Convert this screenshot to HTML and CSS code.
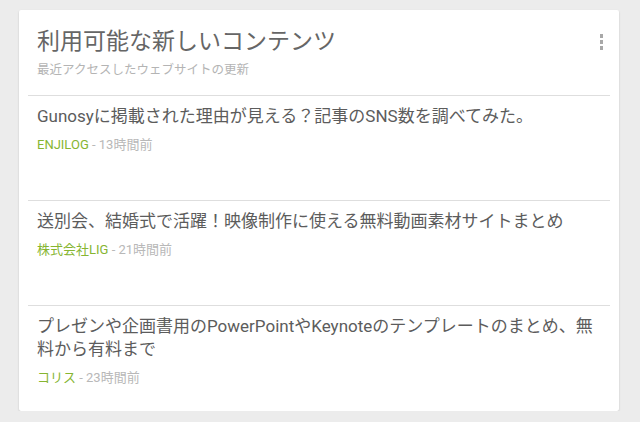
FILE: index.html
```html
<!DOCTYPE html>
<html lang="ja">
<head>
<meta charset="utf-8">
<link rel="stylesheet" href="styles.css">
</head>
<body>
<div class="card">
  <div class="header">
    <div class="header-text">
      <h1 class="title">利用可能な新しいコンテンツ</h1>
      <p class="subtitle">最近アクセスしたウェブサイトの更新</p>
    </div>
    <div class="menu" aria-label="メニュー"><span></span><span></span><span></span></div>
  </div>
  <ul class="list">
    <li class="item">
      <p class="item-title">Gunosyに掲載された理由が見える？記事のSNS数を調べてみた。</p>
      <p class="meta"><span class="source">ENJILOG</span> - 13時間前</p>
    </li>
    <li class="item">
      <p class="item-title">送別会、結婚式で活躍！映像制作に使える無料動画素材サイトまとめ</p>
      <p class="meta"><span class="source">株式会社LIG</span> - 21時間前</p>
    </li>
    <li class="item">
      <p class="item-title">プレゼンや企画書用のPowerPointやKeynoteのテンプレートのまとめ、無料から有料まで</p>
      <p class="meta"><span class="source">コリス</span> - 23時間前</p>
    </li>
  </ul>
</div>
</body>
</html>
```
FILE: styles.css
```css
html, body {
  margin: 0;
  padding: 0;
  background: #ececec;
  font-family: Roboto, "Noto Sans CJK JP", sans-serif;
}
body {
  padding: 10px 0 0 19px;
}
.card {
  width: 600px;
  height: 401px;
  background: #ffffff;
  box-shadow: 0 1px 2px rgba(0, 0, 0, 0.18);
  border-radius: 2px;
  overflow: hidden;
}
.header {
  display: flex;
  justify-content: space-between;
  padding: 18px 16px 17px 18px;
}
.title {
  margin: 0;
  font-size: 23px;
  line-height: 28px;
  font-weight: 400;
  color: #666666;
}
.subtitle {
  margin: 6px 0 0;
  font-size: 12.5px;
  line-height: 16px;
  color: #b4b4b4;
}
.menu {
  display: flex;
  flex-direction: column;
  gap: 2.5px;
  padding-top: 6px;
}
.menu span {
  width: 3.5px;
  height: 3.5px;
  background: #a8a8a8;
}
.list {
  list-style: none;
  margin: 0 9px;
  padding: 0;
}
.item {
  border-top: 1px solid #dedede;
  height: 95px;
  padding: 9px 4px 0 9px;
}
.item-title {
  margin: 0;
  font-size: 17px;
  line-height: 23px;
  color: #5c5c5c;
}
.meta {
  margin: 8px 0 0;
  font-size: 13px;
  line-height: 18px;
  color: #b8b8b8;
}
.source {
  color: #86b531;
}
```
